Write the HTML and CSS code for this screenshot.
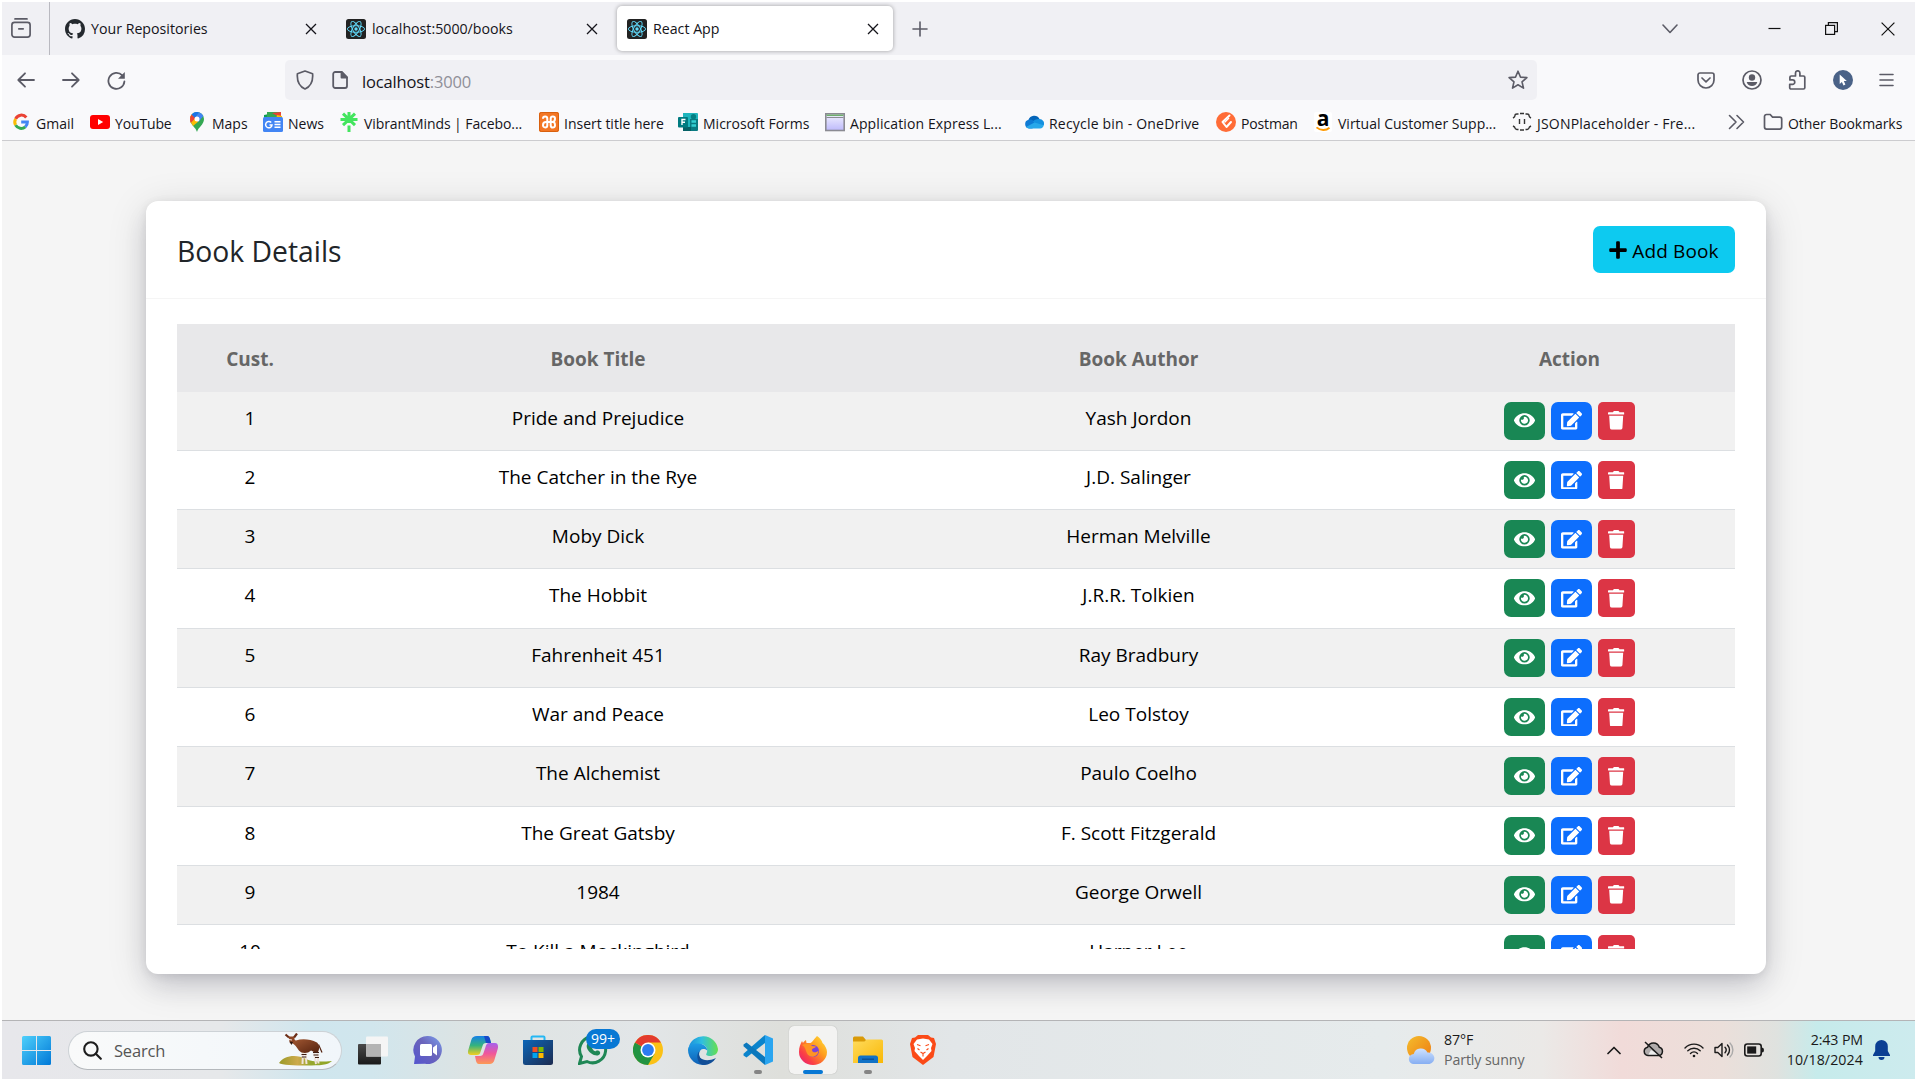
FILE: index.html
```html
<!DOCTYPE html>
<html lang="en">
<head>
<meta charset="utf-8">
<title>React App</title>
<link rel="stylesheet" href="styles.css">
</head>
<body>
<svg class="defs" aria-hidden="true">
  <defs>
    <symbol id="eye" viewBox="0 0 576 512"><path d="M572.52 241.4C518.29 135.59 410.93 64 288 64S57.68 135.64 3.48 241.41a32.35 32.35 0 0 0 0 29.19C57.71 376.41 165.07 448 288 448s230.32-71.64 284.52-177.41a32.35 32.35 0 0 0 0-29.19zM288 400a144 144 0 1 1 144-144 143.93 143.93 0 0 1-144 144zm0-240a95.31 95.31 0 0 0-25.31 3.79 47.85 47.85 0 0 1-66.9 66.9A95.78 95.78 0 1 0 288 160z"/></symbol>
    <symbol id="edit" viewBox="0 0 576 512"><path d="M402.6 83.2l90.2 90.2c3.8 3.8 3.8 10 0 13.8L274.4 405.6l-92.8 10.3c-12.4 1.4-22.9-9.1-21.5-21.5l10.3-92.8L388.8 83.2c3.8-3.8 10-3.8 13.8 0zm162-22.9l-48.8-48.8c-15.2-15.2-39.9-15.2-55.2 0l-35.4 35.4c-3.8 3.8-3.8 10 0 13.8l90.2 90.2c3.8 3.8 10 3.8 13.8 0l35.4-35.4c15.2-15.3 15.2-40 0-55.2zM384 346.2V448H64V128h229.8c3.2 0 6.2-1.3 8.5-3.5l40-40c7.6-7.6 2.2-20.5-8.5-20.5H48C21.5 64 0 85.5 0 112v352c0 26.5 21.5 48 48 48h352c26.5 0 48-21.5 48-48V306.2c0-10.7-12.9-16-20.5-8.5l-40 40c-2.2 2.3-3.5 5.3-3.5 8.5z"/></symbol>
    <symbol id="trash" viewBox="0 0 448 512"><path d="M432 32H312l-9.4-18.7A24 24 0 0 0 281.1 0H166.8a23.72 23.72 0 0 0-21.4 13.3L136 32H16A16 16 0 0 0 0 48v32a16 16 0 0 0 16 16h416a16 16 0 0 0 16-16V48a16 16 0 0 0-16-16zM53.2 467a48 48 0 0 0 47.9 45h245.8a48 48 0 0 0 47.9-45L416 128H32z"/></symbol>
    <symbol id="plus" viewBox="0 0 448 512"><path d="M416 208H272V64c0-17.67-14.33-32-32-32h-32c-17.67 0-32 14.33-32 32v144H32c-17.67 0-32 14.33-32 32v32c0 17.67 14.33 32 32 32h144v144c0 17.67 14.33 32 32 32h32c17.67 0 32-14.33 32-32V304h144c17.67 0 32-14.33 32-32v-32c0-17.67-14.33-32-32-32z"/></symbol>
    <symbol id="close" viewBox="0 0 12 12"><path d="M1 1l10 10M11 1L1 11" fill="none" stroke="#15141a" stroke-width="1.3"/></symbol>
    <symbol id="react" viewBox="0 0 20 20"><rect width="20" height="20" rx="2.5" fill="#222"/><g fill="none" stroke="#61dafb" stroke-width=".95"><ellipse cx="10" cy="10" rx="8.6" ry="3.3"/><ellipse cx="10" cy="10" rx="8.6" ry="3.3" transform="rotate(60 10 10)"/><ellipse cx="10" cy="10" rx="8.6" ry="3.3" transform="rotate(120 10 10)"/></g><circle cx="10" cy="10" r="1.7" fill="#61dafb"/></symbol>
  </defs>
</svg>
<div class="screen">
  <header class="browser">
    <div class="tabstrip">
      <div class="recent"><svg width="20" height="20" viewBox="0 0 20 20" fill="none" stroke="#5b5b66" stroke-width="1.7" stroke-linecap="round"><path d="M4 .9h12"/><rect x=".9" y="4.4" width="18.2" height="14.7" rx="2.6"/><path d="M7.8 10.8h4.4"/></svg></div>
      <div class="tab">
        <svg width="20" height="20" viewBox="0 0 16 16" fill="#24292e"><path d="M8 0C3.58 0 0 3.58 0 8c0 3.54 2.29 6.53 5.47 7.59.4.07.55-.17.55-.38 0-.19-.01-.82-.01-1.49-2.01.37-2.53-.49-2.69-.94-.09-.23-.48-.94-.82-1.13-.28-.15-.68-.52-.01-.53.63-.01 1.08.58 1.23.82.72 1.21 1.87.87 2.33.66.07-.52.28-.87.51-1.07-1.78-.2-3.64-.89-3.64-3.95 0-.87.31-1.59.82-2.15-.08-.2-.36-1.02.08-2.12 0 0 .67-.21 2.2.82.64-.18 1.32-.27 2-.27.68 0 1.36.09 2 .27 1.53-1.04 2.2-.82 2.2-.82.44 1.1.16 1.92.08 2.12.51.56.82 1.27.82 2.15 0 3.07-1.87 3.75-3.65 3.95.29.25.54.73.54 1.48 0 1.07-.01 1.93-.01 2.2 0 .21.15.46.55.38A8.013 8.013 0 0016 8c0-4.42-3.58-8-8-8z"/></svg>
        <span class="tab-title">Your Repositories</span><svg class="x" width="12" height="12"><use href="#close"/></svg>
      </div>
      <div class="tab">
        <svg width="20" height="20"><use href="#react"/></svg>
        <span class="tab-title">localhost:5000/books</span><svg class="x" width="12" height="12"><use href="#close"/></svg>
      </div>
      <div class="tab active">
        <svg width="20" height="20"><use href="#react"/></svg>
        <span class="tab-title">React App</span><svg class="x" width="12" height="12"><use href="#close"/></svg>
      </div>
      <svg class="newtab" width="16" height="16" viewBox="0 0 16 16" fill="none" stroke="#5b5b66" stroke-width="1.6" stroke-linecap="round"><path d="M8 1v14M1 8h14"/></svg>
      <div class="window-controls">
        <svg width="16" height="10" viewBox="0 0 16 10" fill="none" stroke="#5b5b66" stroke-width="1.6" stroke-linecap="round" stroke-linejoin="round"><path d="M1 1l7 7.5L15 1"/></svg>
        <svg class="min" width="13" height="3" viewBox="0 0 13 3"><path d="M.5 1.5h12" stroke="#111" stroke-width="1.2"/></svg>
        <svg width="13" height="13" viewBox="0 0 13 13" fill="none" stroke="#111" stroke-width="1.2"><rect x=".6" y="3.4" width="9" height="9"/><path d="M3.4 3.4V.6h9v9H9.6"/></svg>
        <svg width="14" height="14" viewBox="0 0 14 14" stroke="#111" stroke-width="1.2"><path d="M.6.6l12.8 12.8M13.4.6L.6 13.4"/></svg>
      </div>
    </div>
    <div class="toolbar">
      <div class="nav">
        <svg width="18" height="16" viewBox="0 0 18 16" fill="none" stroke="#5b5b66" stroke-width="1.8" stroke-linecap="round" stroke-linejoin="round"><path d="M17 8H1.5M8 1.3L1.3 8 8 14.7"/></svg>
        <svg width="18" height="16" viewBox="0 0 18 16" fill="none" stroke="#5b5b66" stroke-width="1.8" stroke-linecap="round" stroke-linejoin="round"><path d="M1 8h15.500M10 1.300L16.700 8 10 14.700"/></svg>
        <svg width="19" height="19" viewBox="0 0 19 19" fill="none" stroke="#5b5b66" stroke-width="1.8" stroke-linecap="round"><path d="M15.300 4.400A8 8 0 1 0 17.400 10.500"/><path d="M17.800 1v6.800H11z" fill="#5b5b66" stroke="none"/></svg>
      </div>
      <div class="urlbar">
        <svg width="18" height="20" viewBox="0 0 18 20" fill="none" stroke="#5b5b66" stroke-width="1.7" stroke-linejoin="round"><path d="M9 1L16.600 3.800c.5 6-1.600 12.400-7.600 15.200C3 16.200.9 9.800 1.400 3.800z"/></svg>
        <svg width="16" height="18" viewBox="0 0 16 18" fill="none" stroke="#5b5b66" stroke-width="1.800" stroke-linejoin="round"><path d="M3.200 1h6.500L15 6.300V15a2 2 0 0 1-2 2H3.200a2 2 0 0 1-2-2V3a2 2 0 0 1 2-2z"/><path d="M9.500 1v5.500H15z" fill="#5b5b66"/></svg>
        <span class="url">localhost<span class="port">:3000</span></span>
        <svg width="20" height="20" viewBox="0 0 20 20" fill="none" stroke="#5b5b66" stroke-width="1.600" stroke-linejoin="round"><path d="M10 1.200l2.500 5.900 6.400.5-4.900 4.200 1.500 6.300L10 14.800l-5.500 3.300L6 11.800 1.100 7.600l6.400-.5z"/></svg>
      </div>
      <div class="tools">
        <svg width="18" height="17" viewBox="0 0 18 17" fill="none" stroke="#5b5b66" stroke-width="1.700" stroke-linecap="round" stroke-linejoin="round"><path d="M3 1h12a2 2 0 0 1 2 2v5a8 8 0 0 1-16 0V3a2 2 0 0 1 2-2z"/><path d="M5 6l4 3.800L13 6"/></svg>
        <svg width="20" height="20" viewBox="0 0 20 20"><circle cx="10" cy="10" r="9" fill="none" stroke="#5b5b66" stroke-width="1.700"/><circle cx="10" cy="7.500" r="3.200" fill="#5b5b66"/><path d="M4.700 12h10.600c-.6 2.600-2.700 4.100-5.300 4.100S5.300 14.600 4.700 12z" fill="#5b5b66"/></svg>
        <svg width="18" height="20" viewBox="0 0 18 20" fill="none" stroke="#5b5b66" stroke-width="1.700" stroke-linejoin="round"><path d="M3 19h12.500a1.300 1.300 0 0 0 1.300-1.300V7.300A1.300 1.300 0 0 0 15.500 6h-3.600V3a2.200 2.200 0 0 0-4.400 0v3H3.200a1.300 1.300 0 0 0-1.300 1.300v2.600h2.600a2.200 2.200 0 0 1 0 4.500H1.700v3.300A1.300 1.300 0 0 0 3 19z"/></svg>
        <svg width="20" height="20" viewBox="0 0 20 20"><circle cx="10" cy="10" r="10" fill="#4a6287"/><path d="M6.700 4.600v9.300l2.200-2 1.600 3.600 1.900-.9-1.600-3.500h3z" fill="#fff"/></svg>
        <svg width="15" height="14" viewBox="0 0 15 14" stroke="#5b5b66" stroke-width="1.600" stroke-linecap="round"><path d="M1 1.500h13M1 7h13M1 12.500h13"/></svg>
      </div>
    </div>
    <nav class="bookmarks">
      <a class="bm"><svg width="20" height="20" viewBox="0 0 20 20" fill="none" stroke-width="3"><path d="M15.300 5.500A6.300 6.300 0 0 0 4.600 6.900" stroke="#ea4335"/><path d="M4.600 6.900a6.300 6.300 0 0 0 0 6.200" stroke="#fbbc05"/><path d="M4.600 13.100a6.300 6.300 0 0 0 9.700 1.700" stroke="#34a853"/><path d="M10.200 10h6.200a6.300 6.300 0 0 1-2.100 4.800" stroke="#4285f4"/></svg><span>Gmail</span></a>
      <a class="bm"><svg width="20" height="20" viewBox="0 0 20 20"><rect y="3" width="20" height="14" rx="3" fill="#f00"/><path d="M8 7l5.200 3L8 13z" fill="#fff"/></svg><span class="tight">YouTube</span></a>
      <a class="bm"><svg width="20" height="20" viewBox="0 0 20 20"><path d="M10 20C9 15.500 3 12.600 3 7a7 7 0 0 1 14 0c0 5.600-6 8.500-7 13z" fill="#34a853"/><path d="M3.600 9.800A7 7 0 0 1 4.600 2.600L12 9l-6 5z" fill="#fbbc04"/><path d="M3.100 7.700A7 7 0 0 1 4.600 2.600l4 3.400-5 5z" fill="#ea4335"/><path d="M4.600 2.600A7 7 0 0 1 12 .3L8 6z" fill="#1a73e8"/><path d="M12 .3A7 7 0 0 1 16.300 4L11.500 10 8 6z" fill="#4285f4"/><circle cx="10" cy="7" r="2.500" fill="#fff"/></svg><span>Maps</span></a>
      <a class="bm"><svg width="20" height="20" viewBox="0 0 20 20"><path d="M1 3l12-2.500V10H1z" fill="#0c9d58"/><path d="M4 0h14v9H4z" fill="#34a853"/><path d="M9 1l9-1v6z" fill="#ea4335"/><path d="M14 3l5 1v4h-6z" fill="#fbbc04"/><rect y="5" width="20" height="15" rx="1.500" fill="#4285f4"/><path d="M8.200 10.500a3.200 3.200 0 1 0 .8 2.500H6.500M11.500 9.800h6M11.500 12.500h6M11.500 15.200h6" fill="none" stroke="#fff" stroke-width="1.500"/></svg><span>News</span></a>
      <a class="bm"><svg width="20" height="20" viewBox="0 0 20 20" stroke="#43e55e" stroke-width="3"><path d="M10 0v11M10 13.500V20M1.500 7.500h17M4 1.700l12 11.500M16 1.700L4 13.200"/></svg><span class="tightish">VibrantMinds | Facebo...</span></a>
      <a class="bm"><svg width="20" height="20" viewBox="0 0 20 20"><rect width="20" height="20" rx="2" fill="#f37623"/><rect x=".5" y=".5" width="19" height="19" rx="2" fill="none" stroke="#d8600f"/><path d="M4 6.800C4 3.800 8.300 3.800 8.300 6.800v6.400c0 3-4.300 3-4.300 0S5.500 10 7 10h6c1.500 0 3-.2 3 3.200s-4.300 3-4.300 0V6.800c0-3 4.300-3 4.300 0S14.500 10 13 10" fill="none" stroke="#fff" stroke-width="2"/></svg><span>Insert title here</span></a>
      <a class="bm"><svg width="20" height="20" viewBox="0 0 20 20"><path d="M5 1h14a1 1 0 0 1 1 1v16H5z" fill="#1fb5bd"/><path d="M12 7h8v11a1 1 0 0 1-1 1h-7z" fill="#0a7b82"/><circle cx="15.500" cy="4.800" r="2.700" fill="#037f83"/><path d="M13.500 9.500H18M13.500 13.500H18" stroke="#34d0d2" stroke-width="2.500"/><path d="M5 15h8v4H5z" fill="#056166"/><rect y="5" width="10" height="10.500" rx="1" fill="#007b80"/><path d="M4 13V7.500h3.500M4 10.200h3" stroke="#fff" stroke-width="1.400" fill="none"/></svg><span>Microsoft Forms</span></a>
      <a class="bm"><svg width="20" height="20" viewBox="0 0 20 20"><defs><linearGradient id="apx" x2="0" y2="1"><stop stop-color="#f3f3ff"/><stop offset="1" stop-color="#bdb9fb"/></linearGradient></defs><rect x=".8" y="1.800" width="18.400" height="16.700" fill="url(#apx)" stroke="#8b8b93" stroke-width="1.600"/><path d="M1.500 3.300h17" stroke="#6fae6c" stroke-width="1.500"/><path d="M1.500 5.500h17" stroke="#8b8b93"/></svg><span class="wide">Application Express L...</span></a>
      <a class="bm"><svg width="20" height="20" viewBox="0 0 20 20"><path d="M4.500 8A6 6 0 0 1 15.500 7l-4 6H3z" fill="#0364b8"/><path d="M4.500 7.700c2-.4 3.500 0 5 1.100L16 13l-8 3.500H5A4.500 4.500 0 0 1 4.500 7.700z" fill="#0f7ad4"/><path d="M15.500 7a4.700 4.700 0 0 1 4.300 6.300L13 14 9 9.500c1-2 4-2.800 6.500-2.500z" fill="#1490df"/><path d="M2 15l8.500-4.500L19.800 13.300A4 4 0 0 1 16 16.500H5A4.500 4.500 0 0 1 2 15z" fill="#28a8ea"/></svg><span class="wider">Recycle bin - OneDrive</span></a>
      <a class="bm"><svg width="20" height="20" viewBox="0 0 20 20"><circle cx="10" cy="10" r="10" fill="#ff6c37"/><path d="M13.500 3.500L6.500 10l4 5 4.500-5" stroke="#fff" stroke-width="2" fill="none" stroke-linejoin="round" stroke-linecap="round"/><path d="M8.500 10.500L13 6" stroke="#fff" stroke-width="1.200"/></svg><span class="tight">Postman</span></a>
      <a class="bm"><svg width="20" height="20" viewBox="0 0 20 20"><rect x="1" width="18" height="20" rx="2" fill="#fff"/><text class="a-logo" x="10" y="13.500">a</text><path d="M3.500 15.400c4 3.400 9.500 3.400 13 .3" stroke="#f90" stroke-width="1.900" fill="none"/></svg><span>Virtual Customer Supp...</span></a>
      <a class="bm"><svg width="20" height="20" viewBox="0 0 20 20" fill="none" stroke="#333" stroke-width="1.400"><path d="M6.500 2H5Q3 2 3 3.500T1 6M13.500 2H15q2 0 2 1.500T19 6M1 14q2 1 2 2t2 1.500h1.500M19 14q-2 1-2 2t-2 1.500h-1.500M8 1.500h4M8 18h4M7.500 7v5M12.500 7v5"/></svg><span class="wider">JSONPlaceholder - Fre...</span></a>
      <svg class="more" width="17" height="16" viewBox="0 0 17 16" fill="none" stroke="#5b5b66" stroke-width="1.600" stroke-linecap="round" stroke-linejoin="round"><path d="M1.500 1.500L8 8l-6.500 6.500M9 1.500L15.500 8 9 14.500"/></svg>
      <a class="bm"><svg width="20" height="20" viewBox="0 0 20 20" fill="none" stroke="#5b5b66" stroke-width="1.700"><path d="M3.500 2.500h3.700l2.300 2.600h7.200a2 2 0 0 1 2 2v8a2 2 0 0 1-2 2H3.500a2 2 0 0 1-2-2V4.500a2 2 0 0 1 2-2z"/></svg><span class="tightish">Other Bookmarks</span></a>
    </nav>
  </header>

  <main class="page">
    <section class="card">
      <div class="card-head">
        <h4>Book Details</h4>
        <button class="btn-add"><svg width="18" height="20"><use href="#plus"/></svg><span>Add Book</span></button>
      </div>
      <div class="card-body">
        <div class="table-scroll">
          <div class="row head"><span>Cust.</span><span>Book Title</span><span>Book Author</span><span>Action</span></div>
          <div class="row"><span>1</span><span>Pride and Prejudice</span><span>Yash Jordon</span><div class="actions"><button class="view"><svg><use href="#eye"/></svg></button><button class="edit"><svg><use href="#edit"/></svg></button><button class="del"><svg><use href="#trash"/></svg></button></div></div>
          <div class="row"><span>2</span><span>The Catcher in the Rye</span><span>J.D. Salinger</span><div class="actions"><button class="view"><svg><use href="#eye"/></svg></button><button class="edit"><svg><use href="#edit"/></svg></button><button class="del"><svg><use href="#trash"/></svg></button></div></div>
          <div class="row"><span>3</span><span>Moby Dick</span><span>Herman Melville</span><div class="actions"><button class="view"><svg><use href="#eye"/></svg></button><button class="edit"><svg><use href="#edit"/></svg></button><button class="del"><svg><use href="#trash"/></svg></button></div></div>
          <div class="row"><span>4</span><span>The Hobbit</span><span>J.R.R. Tolkien</span><div class="actions"><button class="view"><svg><use href="#eye"/></svg></button><button class="edit"><svg><use href="#edit"/></svg></button><button class="del"><svg><use href="#trash"/></svg></button></div></div>
          <div class="row"><span>5</span><span>Fahrenheit 451</span><span>Ray Bradbury</span><div class="actions"><button class="view"><svg><use href="#eye"/></svg></button><button class="edit"><svg><use href="#edit"/></svg></button><button class="del"><svg><use href="#trash"/></svg></button></div></div>
          <div class="row"><span>6</span><span>War and Peace</span><span>Leo Tolstoy</span><div class="actions"><button class="view"><svg><use href="#eye"/></svg></button><button class="edit"><svg><use href="#edit"/></svg></button><button class="del"><svg><use href="#trash"/></svg></button></div></div>
          <div class="row"><span>7</span><span>The Alchemist</span><span>Paulo Coelho</span><div class="actions"><button class="view"><svg><use href="#eye"/></svg></button><button class="edit"><svg><use href="#edit"/></svg></button><button class="del"><svg><use href="#trash"/></svg></button></div></div>
          <div class="row"><span>8</span><span>The Great Gatsby</span><span>F. Scott Fitzgerald</span><div class="actions"><button class="view"><svg><use href="#eye"/></svg></button><button class="edit"><svg><use href="#edit"/></svg></button><button class="del"><svg><use href="#trash"/></svg></button></div></div>
          <div class="row"><span>9</span><span>1984</span><span>George Orwell</span><div class="actions"><button class="view"><svg><use href="#eye"/></svg></button><button class="edit"><svg><use href="#edit"/></svg></button><button class="del"><svg><use href="#trash"/></svg></button></div></div>
          <div class="row"><span>10</span><span>To Kill a Mockingbird</span><span>Harper Lee</span><div class="actions"><button class="view"><svg><use href="#eye"/></svg></button><button class="edit"><svg><use href="#edit"/></svg></button><button class="del"><svg><use href="#trash"/></svg></button></div></div>
        </div>
      </div>
    </section>
  </main>

  <footer class="taskbar">
    <svg class="start" width="29" height="29" viewBox="0 0 29 29"><defs><linearGradient id="win" x2="1" y2="1"><stop stop-color="#4fd0fb"/><stop offset="1" stop-color="#0078d7"/></linearGradient></defs><path d="M1.500 0H14v14H0V1.500Q0 0 1.500 0zM15 0h12.500Q29 0 29 1.500V14H15zM0 15h14v14H1.500Q0 29 0 27.500zM15 15h14v12.500q0 1.500-1.500 1.500H15z" fill="url(#win)"/></svg>
    <div class="search">
      <svg width="19" height="19" viewBox="0 0 19 19" fill="none" stroke="#1d1d1d" stroke-width="2.100" stroke-linecap="round"><circle cx="7.900" cy="7.900" r="6.700"/><path d="M12.800 12.800l5 5"/></svg>
      <span>Search</span>
      <svg class="okapi" width="53" height="34" viewBox="0 0 53 34"><defs><linearGradient id="hill" x2="1"><stop stop-color="#9a9a28"/><stop offset=".35" stop-color="#cdaa4c"/><stop offset=".6" stop-color="#96a72d"/><stop offset="1" stop-color="#8fa524"/></linearGradient><linearGradient id="fur" x2="1" y2="1"><stop stop-color="#a55a34"/><stop offset="1" stop-color="#54220f"/></linearGradient></defs><path d="M0 30C5 22 18 21 27 26c6 3 15 3 26 2-4 4-12 4.500-25 4.500C15 32.500 3 32 0 30z" fill="url(#hill)"/><path d="M24 19l-.5 12M26.500 19l1 12M35 19l2 12M38 17l1.500 13.500" stroke="#efe3da" stroke-width="2"/><path d="M22.500 21.500h5M22.800 24h4.500M34 19.500h6M34.500 22h5M36 24.500h4" stroke="#3a1a10" stroke-width="1"/><path d="M12 5.500c2 0 3 1.500 5 2 6-2 14-1.500 21 2 2 2 3 6.500 1 9.500-3 1-5-.5-7-1.500-2.500 2.500-6 3-9.500 2-4-2-5-8-10.500-10z" fill="url(#fur)"/><path d="M6.500 1.500l3.500 3M18 .5l-3 4" stroke="#6b2d17" stroke-width="2.200"/><path d="M9.500 3.500h5.500l.8 4-3 3.500-2-1z" fill="#8c4526"/><path d="M10.500 8.500l3.500.5-1.500 3z" fill="#2b1710"/><path d="M10 6.500l3 .5" stroke="#f3e8e0"/><path d="M39.500 11.500l3.500 8" stroke="#54220f" stroke-width="1.200"/></svg>
    </div>
    <div class="apps">
      <div class="app"><svg width="30" height="29" viewBox="0 0 30 29"><defs><linearGradient id="tv" x2="0" y2="1"><stop stop-color="#494949"/><stop offset="1" stop-color="#1a1a1a"/></linearGradient></defs><rect y="8" width="23" height="20.500" rx="1" fill="url(#tv)"/><rect x="8" y=".5" width="22" height="20" rx="1" fill="#f5f5f5"/><path d="M8 8h15v12.500H8z" fill="#b4b4b4"/></svg></div>
      <div class="app"><svg width="30" height="30" viewBox="0 0 30 30"><defs><linearGradient id="chat" x1="1" x2="0" y2="1"><stop stop-color="#7ba0ee"/><stop offset=".45" stop-color="#6b64bb"/><stop offset="1" stop-color="#5455cf"/></linearGradient></defs><path d="M15 1a14 14 0 1 1-3 27.700L1 29l1-7.500A14 14 0 0 1 15 1z" fill="url(#chat)"/><rect x="7" y="9" width="12" height="12" rx="1.500" fill="#fff"/><path d="M20 12.500L24 9.500v11l-4-3z" fill="#fff"/></svg></div>
      <div class="app"><svg width="30" height="30" viewBox="0 0 30 30"><defs><linearGradient id="co1" x2="0" y2="1"><stop stop-color="#1580e8"/><stop offset=".5" stop-color="#35b37d"/><stop offset="1" stop-color="#f3cf1f"/></linearGradient><linearGradient id="co2" x2="0" y2="1"><stop stop-color="#a660ed"/><stop offset=".5" stop-color="#f0569b"/><stop offset="1" stop-color="#fc9a55"/></linearGradient></defs><path d="M9 1h10c2 0 2.500 1.500 3 3l1 4h-5c-2 0-3 1-3.500 3l-2 6c-.5 2-1.500 3-3.500 3H3c-3 0-3.500-2-2.700-5l3-10C4.200 2 6 1 9 1z" fill="url(#co1)"/><path d="M16 1h3c2 0 2.500 1.500 3 3l1 4h-5z" fill="#1749c9"/><path d="M21 29H11c-2 0-2.500-1.500-3-3l-1-5h5c2 0 3-1 3.500-3l2-6c.5-2 1.500-4 3.500-4h6c3 0 3.500 3 2.700 6l-3 10C25.800 28 24 29 21 29z" fill="url(#co2)"/></svg></div>
      <div class="app"><svg width="30" height="30" viewBox="0 0 30 30"><defs><linearGradient id="st" x2="1" y2="1"><stop stop-color="#0c66b8"/><stop offset="1" stop-color="#1c2b50"/></linearGradient></defs><path d="M8.500 6V2.500Q8.500 1.500 9.500 1.500h11q1 0 1 1V6" fill="none" stroke="#24b8f4" stroke-width="2"/><path d="M0 5h30v22.500q0 2.500-2.500 2.500h-25Q0 30 0 27.500z" fill="url(#st)"/><path d="M9.500 12h5v5h-5z" fill="#f25022"/><path d="M15.500 12h5v5h-5z" fill="#7fba00"/><path d="M9.500 18h5v5h-5z" fill="#00a4ef"/><path d="M15.500 18h5v5h-5z" fill="#ffb900"/></svg></div>
      <div class="app"><svg width="30" height="30" viewBox="0 0 30 30"><path d="M3.500 21.500A13 13 0 1 1 9 26.500L1.500 28.500z" fill="none" stroke="#1f8755" stroke-width="3"/><path d="M9.500 8.500c-2 3 0 7 3.500 9.800s8 3 9 .5-2.500-4-4-2.700-5-3-4-4.500-2-5-4.500-3.100z" fill="#1f8755"/></svg><span class="badge">99+</span></div>
      <div class="app"><svg width="30" height="30" viewBox="0 0 30 30"><circle cx="15" cy="15" r="15" fill="#fbc116"/><path d="M15 15L2 7.500A15 15 0 0 0 15 30l6.500-11.200z" fill="#229342"/><path d="M15 15L2 7.500A15 15 0 0 1 28 7.500H15z" fill="#e33b2e"/><circle cx="15" cy="15" r="7.500" fill="#fff"/><circle cx="15" cy="15" r="5.900" fill="#2d7cf0"/></svg></div>
      <div class="app"><svg width="30" height="30" viewBox="0 0 30 30"><defs><linearGradient id="ed1" x2="1"><stop stop-color="#1c8fdc"/><stop offset=".45" stop-color="#2fbfe0"/><stop offset="1" stop-color="#66e04f"/></linearGradient><linearGradient id="ed2" x2="0" y2="1"><stop stop-color="#1d9de6"/><stop offset="1" stop-color="#0f5fb5"/></linearGradient></defs><path d="M.5 13A15 15 0 0 1 30 14c0 5-4 7-8 7-3 0-4.500-1-3.500-2.500C21 14 17 9 12 9 7 9 2 10 .5 13z" fill="url(#ed1)"/><path d="M0 15C0 10 5 8 10 8.500c5 0 9 3 9.300 7-5-3.500-9 0-8 5 .8 4 4 7 8 7.500l-1 1.600A15 15 0 0 1 0 15z" fill="url(#ed2)"/><path d="M11.500 16c-3 8 6 12 16.500 7a15 15 0 0 1-12 7c-6 0-9-10-4.500-14z" fill="#124f98"/></svg></div>
      <div class="app run"><svg width="30" height="30" viewBox="0 0 30 30"><path d="M22 8L3.500 22.500.5 20.500v-1.800L22 0z" fill="#0a84cc"/><path d="M22 22L3.500 7.500.5 9.500v1.800L22 30z" fill="#0b78bd"/><path d="M22 0l8 3.500v23L22 30z" fill="#2aa5f0"/></svg></div>
      <div class="app run current"><svg width="28" height="29" viewBox="0 0 28 29"><defs><linearGradient id="ff" x1="1" x2="0" y2="1"><stop stop-color="#ffe83a"/><stop offset=".4" stop-color="#ff9a1e"/><stop offset=".72" stop-color="#fb3f45"/><stop offset="1" stop-color="#df1885"/></linearGradient></defs><path d="M18 0c4 3 5 5 5.500 7 2.500 2 4.500 6 4.500 9a14 13 0 0 1-28 0C0 11 1.500 8 3 5l1 2c.8-1.500 2-2.500 3-3l.5 3h4c2-1 3.500-4 6.500-7z" fill="url(#ff)"/><circle cx="14" cy="15" r="6" fill="#7b41d8"/><path d="M3 9c4-2 8-1.500 10 1l4 .5c-1 2-4 1.500-4 3.500 0 3 5 3 6.500.5C19 20 14 22 10.500 20 6.500 18 7.500 11 3 9z" fill="#ff9323"/></svg></div>
      <div class="app run"><svg width="30" height="28" viewBox="0 0 30 28"><defs><linearGradient id="fo" x2="1" y2="1"><stop stop-color="#ffdb5c"/><stop offset="1" stop-color="#f9b806"/></linearGradient></defs><path d="M0 2Q0 .5 1.500.5H10L13 4h15v4H0z" fill="#d99a08"/><path d="M0 5.500h11.500l2-2H28.500q1.500 0 1.500 1.500v22H0z" fill="url(#fo)"/><path d="M5 27v-5q0-2.500 2.500-2.500h15q2.500 0 2.500 2.500v5z" fill="#1172c6"/><path d="M9 23.200h12" stroke="#0a4d92" stroke-width="1.300"/></svg></div>
      <div class="app"><svg width="26" height="30" viewBox="0 0 26 30"><path d="M8 0h10l3 2.500 3 .5 2 6-2.500 13L13 30 2.500 22 0 9l2-6 3-.5z" fill="#fb4a17"/><path d="M13 3.500l6 1L22.500 9 21 13l.5 3-4.500 5-4 4-4-4-4.500-5 .5-3-1.500-4L7 4.500z" fill="#fff"/><path d="M7 9.500l3.500 1.200M19 9.500l-3.500 1.200M10.500 17l2.500 1.500 2.500-1.500M7.500 13.500l2 1.500M18.500 13.500l-2 1.500M13 18.500v3" fill="none" stroke="#fb4a17" stroke-width="1.100"/></svg></div>
    </div>
    <div class="weather">
      <svg width="28" height="28" viewBox="0 0 28 28"><defs><linearGradient id="sun" x2="1" y2="1"><stop stop-color="#f4bd2d"/><stop offset="1" stop-color="#ee7b12"/></linearGradient><linearGradient id="cl" x2="0" y2="1"><stop stop-color="#cfe2ff"/><stop offset="1" stop-color="#86aef2"/></linearGradient></defs><circle cx="12" cy="12" r="12" fill="url(#sun)"/><path d="M7 28a5 5 0 0 1-.3-10A7.500 7.500 0 0 1 20.500 16.500 5.500 5.500 0 0 1 22.500 28z" fill="url(#cl)"/></svg>
      <div class="lines"><span>87°F</span><span class="muted">Partly sunny</span></div>
    </div>
    <div class="tray">
      <svg width="14" height="9" viewBox="0 0 14 9" fill="none" stroke="#1a1a1a" stroke-width="1.700" stroke-linecap="round" stroke-linejoin="round"><path d="M1 7.500L7 1.500l6 6"/></svg>
      <svg class="cloud" width="21" height="18" viewBox="0 0 21 18"><path d="M5 14.500A4.200 4.200 0 0 1 4.600 6.200 6.200 6.200 0 0 1 16.300 6.300 4.200 4.200 0 0 1 16 14.500z" fill="#b0abab" stroke="#1a1a1a" stroke-width="1.500"/><path d="M5.500 13.500L8 9l8 4.500z" fill="#eee"/><path d="M2 1l17 16" stroke="#1a1a1a" stroke-width="1.500"/></svg>
      <svg class="wifi" width="20" height="16" viewBox="0 0 20 16" fill="none" stroke="#1a1a1a" stroke-width="1.400" stroke-linecap="round"><path d="M1 6a12.500 12.500 0 0 1 18 0M3.800 8.800a8.700 8.700 0 0 1 12.400 0M6.500 11.500a5 5 0 0 1 7 0"/><circle cx="10" cy="14" r="1.300" fill="#1a1a1a" stroke="none"/></svg>
      <svg class="sound" width="20" height="16" viewBox="0 0 20 16" fill="none" stroke="#1a1a1a" stroke-width="1.400" stroke-linecap="round" stroke-linejoin="round"><path d="M1 5.500h2.800L8 1.500v13l-4.200-4H1zM11 5.300a4 4 0 0 1 0 5.400M13.500 3a7.300 7.300 0 0 1 0 10"/><path d="M16 1a10 10 0 0 1 0 14" stroke="#aaa"/></svg>
      <svg class="battery" width="20" height="14" viewBox="0 0 20 14"><rect x=".8" y="1" width="16.400" height="12" rx="2.500" fill="none" stroke="#1a1a1a" stroke-width="1.600"/><rect x="3.200" y="3.400" width="9" height="7.200" fill="#1a1a1a"/><path d="M18 4.500q2 0 2 2.500t-2 2.500z" fill="#1a1a1a"/></svg>
      <div class="lines clock"><span>2:43 PM</span><span class="date">10/18/2024</span></div>
      <svg width="17" height="20" viewBox="0 0 17 20"><path d="M8.500 0a6.300 6.300 0 0 1 6.300 6.300V11L17 15v1H0v-1l2.200-4V6.300A6.300 6.300 0 0 1 8.500 0zM5.500 17h6a3 3 0 0 1-6 0z" fill="#0b3f93"/></svg>
    </div>
  </footer>
</div>
</body>
</html>
```

FILE: styles.css
```css
* { box-sizing: border-box; }
body {
  margin: 0;
  background: #fff;
  font-family: "Open Sans", "Noto Sans", sans-serif;
  color: #15141a;
}
svg { display: block; flex: none; }
.defs { position: absolute; width: 0; height: 0; }
.screen {
  width: 1917px;
  height: 1081px;
  padding: 2px;
  display: flex;
  flex-direction: column;
  overflow: hidden;
}

/* Browser chrome */
.browser { height: 139px; flex: none; background: #f9f9fb; border-bottom: 1px solid #cccccf; font-size: 14px; }
.tabstrip { height: 53px; background: #f0f0f4; display: flex; align-items: center; }
.recent { width: 48px; height: 53px; padding: 16px 0 0 9px; border-right: 1px solid #b9b9c0; }
.tab { width: 276px; height: 45px; margin: 0 0 0 5px; padding: 0 14px 0 10px; display: flex; align-items: center; gap: 6px; border-radius: 5px; flex: none; }
.tab-title { flex: 1; white-space: nowrap; font-size: 14.2px; }
.tab .x { margin-right: 0; }
.tab.active { background: #fff; box-shadow: 0 0 4px rgba(0, 0, 0, .35); }
.newtab { margin-left: 19px; }
.window-controls { margin-left: auto; display: flex; align-items: center; padding-right: 20px; }
.window-controls svg:nth-child(2) { margin: 0 44px 0 90px; }
.window-controls svg:nth-child(4) { margin-left: 43px; }

.toolbar { height: 49px; padding-top: 5px; display: flex; align-items: flex-start; }
.nav { width: 283px; height: 40px; padding-left: 15px; display: flex; align-items: center; gap: 27px; }
.urlbar { width: 1252px; height: 40px; padding: 0 9px 0 11px; display: flex; align-items: center; background: #f0f0f4; border-radius: 5px; }
.urlbar svg:nth-child(2) { margin: 0 14px 0 18px; }
.url { flex: 1; padding-top: 2px; font-size: 16.5px; letter-spacing: -.15px; }
.port { color: #8f8f98; }
.tools { flex: 1; height: 40px; padding: 0 21px 0 160px; display: flex; align-items: center; justify-content: space-between; }

.bookmarks {
  height: 36px;
  padding-left: 9px;
  display: grid;
  grid-template-columns: 79px 97px 76px 76px 200px 139px 147px 199px 192px 97px 199px 216px 35px 150px;
  align-items: center;
}
.bm { display: flex; align-items: center; gap: 5px; white-space: nowrap; }
.bm span { padding-top: 2px; }
.tight { letter-spacing: -.15px; }
.tightish { letter-spacing: -.08px; }
.wide { letter-spacing: .1px; }
.wider { letter-spacing: .2px; }
.a-logo { font: bold 21px "Open Sans", sans-serif; text-anchor: middle; fill: #000; }

/* Page */
.page { height: 879px; flex: none; padding: 60px 149px 0 144px; background: #f5f5f5; overflow: hidden; }
.card { width: 1620px; height: 773px; background: #fff; border-radius: 12px; box-shadow: 0 13px 27px -5px rgba(50, 50, 93, .16), 0 8px 40px rgba(0, 0, 0, .14), 0 2px 10px rgba(0, 0, 0, .08); }
.card-head { height: 98px; padding: 25px 31px; display: flex; align-items: flex-start; justify-content: space-between; border-bottom: 1px solid #f5f5f5; }
.card-head h4 { margin: 6px 0 0; font-size: 28.3px; line-height: 38px; font-weight: 400; color: #212529; }
button { border: 0; font-family: inherit; padding: 0; }
.btn-add { width: 142px; height: 47px; display: flex; align-items: center; justify-content: center; gap: 5px; border-radius: 7px; background: #0dcaf0; color: #000; font-size: 19px; letter-spacing: .15px; }
.btn-add span { padding-top: 2px; }
.card-body { padding: 25px 31px 0; }
.table-scroll { height: 625px; overflow: hidden; }
.row { height: 59.28px; display: grid; grid-template-columns: 145px 551px 530px 332px; border-bottom: 1px solid #dcdfe2; font-size: 19px; line-height: 30px; text-align: center; color: #000; }
.row > span { padding: 11px 0 0 1px; }
.row:nth-child(even) { background: #f1f1f1; }
.row.head { height: 67.7px; border: 0; background: #e8e8ea; color: #666; font-weight: 700; }
.row.head > span { padding-top: 20px; }
.actions { display: flex; justify-content: center; gap: 6px; padding-top: 10px; }
.actions button { width: 41px; height: 38px; display: flex; align-items: center; justify-content: center; border-radius: 7px; fill: #fff; }
.actions svg { width: 21px; height: 18.7px; }
.actions .view { background: #198754; }
.actions .edit { background: #0d6efd; }
.actions .del { width: 37px; padding-left: 1px; background: #dc3545; border-radius: 5px; }
.actions .del svg { width: 16.4px; }

/* Taskbar */
.taskbar {
  height: 59px;
  flex: none;
  padding-left: 20px;
  display: flex;
  align-items: center;
  border-top: 1px solid #b4b4b6;
  background: linear-gradient(90deg, #e7e7eb 0, #e6e8ea 220px, #cfe6ee 310px, #d1e6ed 370px, #dee3e2 480px, #e2e6e8 640px, #dedfdb 780px, #e2e6e8 950px, #e6ebec 1380px, #ebe9e7 1540px, #f1dbd9 1620px, #ebdfda 1720px, #dfe2df 1775px, #c6ebeb 1815px, #cdebee 1913px);
}
.search { width: 274px; height: 39px; margin-left: 17px; padding-left: 14px; display: flex; align-items: center; border: 1px solid #cdd2d6; border-bottom-color: #b4b8bc; border-radius: 20px; background: linear-gradient(90deg, #f9fafa, #f1f6fa); font-size: 16.5px; letter-spacing: -.2px; color: #555; }
.search span { margin-left: 12px; }
.okapi { margin: 0 9px 0 auto; }
.apps { display: flex; margin-left: 3px; }
.app { position: relative; width: 55px; height: 48px; display: flex; align-items: center; justify-content: center; }
.badge { position: absolute; left: 21px; top: 3px; width: 34px; height: 20px; border-radius: 10px; background: #0878d4; color: #fff; font-size: 14px; line-height: 20px; text-align: center; }
.run::after { content: ""; position: absolute; left: 24px; bottom: 0; width: 8px; height: 4px; border-radius: 2px; background: #858585; }
.current { width: 48px; margin: 0 3px 0 4px; border-radius: 5px; background: #f3f3f2; box-shadow: 0 0 1px rgba(0, 0, 0, .3); }
.current::after { left: 14px; width: 20px; background: #0878d4; }
.weather { display: flex; align-items: center; gap: 9px; margin-left: 457px; }
.lines { display: flex; flex-direction: column; font-size: 14.2px; line-height: 20px; letter-spacing: -.1px; color: #1a1a1a; white-space: nowrap; }
.muted { color: #666; }
.tray { margin-left: auto; padding-right: 25px; display: flex; align-items: center; }
.cloud { margin-left: 22px; }
.wifi { margin-left: 20px; }
.sound { margin-left: 10px; }
.battery { margin-left: 10px; }
.clock { width: 99px; text-align: right; margin-right: 10px; }
.date { letter-spacing: .1px; }
```
